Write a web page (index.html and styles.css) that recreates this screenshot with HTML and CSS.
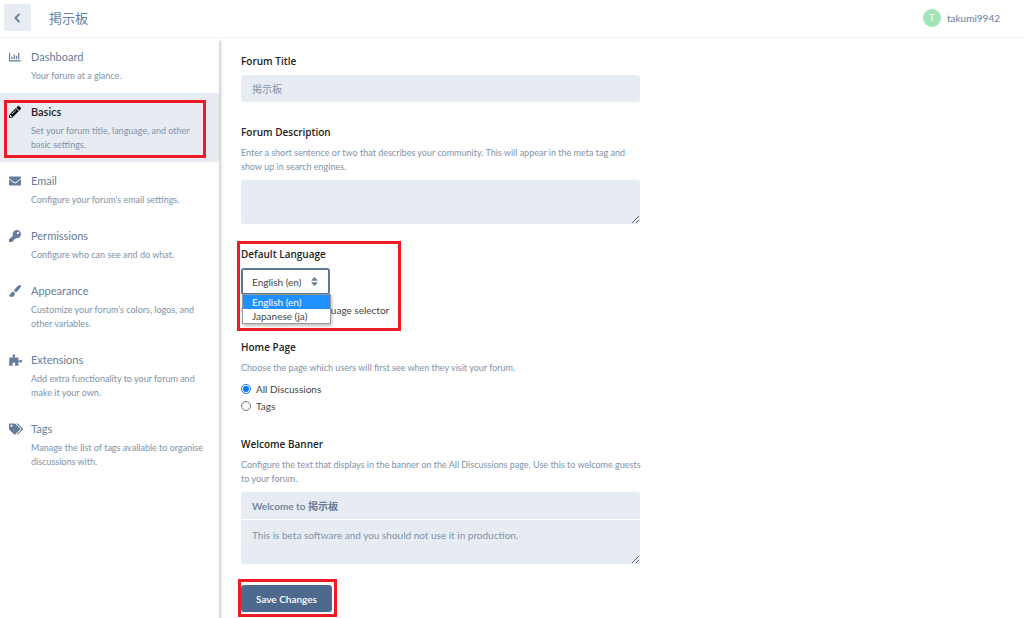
FILE: index.html
```html
<!DOCTYPE html>
<html lang="en">
<head>
  <meta charset="UTF-8" />
  <meta name="viewport" content="width=device-width, initial-scale=1" />
  <title>Basics - 掲示板</title>
  <link rel="stylesheet" href="styles.css">
</head>
<body>
  <header class="header">
    <button type="button" class="back" aria-label="Back">
      <svg viewBox="0 0 320 512"><path d="M34.52 239.03L228.87 44.69c9.37-9.37 24.57-9.37 33.94 0l22.67 22.67c9.36 9.36 9.37 24.52.04 33.9L131.49 256l154.02 154.75c9.34 9.38 9.32 24.54-.04 33.9l-22.67 22.67c-9.37 9.37-24.57 9.37-33.94 0L34.52 272.97c-9.37-9.37-9.37-24.57 0-33.94z"/></svg>
    </button>
    <a class="site-title" href="#">掲示板</a>
    <a class="user" href="#"><span class="avatar">T</span>takumi9942</a>
  </header>

  <div class="page">
    <nav class="sidebar">
      <a class="nav-item" href="#">
        <svg class="icon" viewBox="0 0 512 512"><path d="M24 64a24 24 0 0 1 24 24v304h440a28 28 0 0 1 0 56H24a24 24 0 0 1-24-24V88a24 24 0 0 1 24-24zM100 240h52v112h-52zM196 150h52v202h-52zM292 200h52v152h-52zM388 90h52v262h-52z"/></svg>
        <span class="nav-title">Dashboard</span>
        <span class="nav-text">Your forum at a glance.</span>
      </a>
      <a class="nav-item active marked" href="#">
        <svg class="icon" viewBox="0 0 512 512"><path d="M497.9 142.1l-46.1 46.1c-4.7 4.7-12.3 4.7-17 0l-111-111c-4.7-4.7-4.7-12.3 0-17l46.1-46.1c18.7-18.7 49.1-18.7 67.9 0l60.1 60.1c18.8 18.7 18.8 49.1 0 67.9zM284.2 99.8L21.6 362.4.4 483.9c-2.9 16.4 11.4 30.6 27.8 27.8l121.5-21.3 262.6-262.6c4.7-4.7 4.7-12.3 0-17l-111-111c-4.8-4.7-12.4-4.7-17.1 0zM124.1 339.9c-5.5-5.5-5.5-14.3 0-19.8l154-154c5.5-5.5 14.3-5.5 19.8 0s5.5 14.3 0 19.8l-154 154c-5.5 5.5-14.3 5.5-19.8 0zM88 424h48v36.3l-64.5 11.3-31.1-31.1L51.7 376H88v48z"/></svg>
        <span class="nav-title">Basics</span>
        <span class="nav-text">Set your forum title, language, and other basic settings.</span>
      </a>
      <a class="nav-item" href="#">
        <svg class="icon" viewBox="0 0 512 512"><path d="M502.3 190.8c3.9-3.1 9.7-.2 9.7 4.7V400c0 26.5-21.5 48-48 48H48c-26.5 0-48-21.5-48-48V195.6c0-5 5.7-7.8 9.7-4.7 22.4 17.4 52.1 39.5 154.1 113.6 21.1 15.4 56.7 47.8 92.2 47.6 35.7.3 72-32.8 92.3-47.6 102-74.1 131.6-96.3 154-113.7zM256 320c23.2.4 56.6-29.2 73.4-41.4 132.7-96.3 142.8-104.7 173.4-128.7 5.8-4.5 9.2-11.5 9.2-18.9v-19c0-26.5-21.5-48-48-48H48c-26.5 0-48 21.5-48 48v19c0 7.4 3.4 14.3 9.2 18.9 30.6 23.9 40.7 32.4 173.4 128.7 16.8 12.2 50.2 41.8 73.4 41.4z"/></svg>
        <span class="nav-title">Email</span>
        <span class="nav-text">Configure your forum's email settings.</span>
      </a>
      <a class="nav-item" href="#">
        <svg class="icon" viewBox="0 0 512 512"><path d="M512 176.001C512 273.203 433.202 352 336 352c-11.22 0-22.19-1.062-32.827-3.069l-24.012 27.014A23.999 23.999 0 0 1 261.223 384H224v40c0 13.255-10.745 24-24 24h-40v40c0 13.255-10.745 24-24 24H24c-13.255 0-24-10.745-24-24v-78.059c0-6.365 2.529-12.47 7.029-16.971l161.802-161.802C163.108 213.814 160 195.271 160 176 160 78.798 238.797.001 335.999 0 433.488-.001 512 78.511 512 176.001zM336 128c0 26.51 21.49 48 48 48s48-21.49 48-48-21.49-48-48-48-48 21.49-48 48z"/></svg>
        <span class="nav-title">Permissions</span>
        <span class="nav-text">Configure who can see and do what.</span>
      </a>
      <a class="nav-item" href="#">
        <svg class="icon" viewBox="0 0 512 512"><path d="M448 4c36-16 78 20 58 62-30 62-130 190-188 236-12 10-26 14-40 12-12-34-40-58-76-64 0-16 6-30 18-42C276 146 386 32 448 4zM168 284c48 0 84 34 84 80 0 82-58 144-142 148C44 514 0 466 0 394c30 22 54 24 62-4 16-64 54-106 106-106z"/></svg>
        <span class="nav-title">Appearance</span>
        <span class="nav-text">Customize your forum's colors, logos, and other variables.</span>
      </a>
      <a class="nav-item" href="#">
        <svg class="icon wide" viewBox="0 0 576 512"><path d="M0 150h150c14 0 18-12 8-28-36-54-18-110 38-110s74 56 38 110c-10 16-6 28 8 28h150v120c0 16 14 22 30 10 62-40 134-30 134 30s-72 70-134 30c-16-12-30-6-30 10v150H258c-18 0-20-14-12-30 26-56 6-110-50-110s-76 54-50 110c8 16 6 30-12 30H0z"/></svg>
        <span class="nav-title">Extensions</span>
        <span class="nav-text">Add extra functionality to your forum and make it your own.</span>
      </a>
      <a class="nav-item" href="#">
        <svg class="icon wide" viewBox="0 0 640 512"><path d="M497.941 225.941L286.059 14.059A48 48 0 0 0 252.118 0H48C21.49 0 0 21.49 0 48v204.118a48 48 0 0 0 14.059 33.941l211.882 211.882c18.744 18.745 49.136 18.746 67.882 0l204.118-204.118c18.745-18.745 18.745-49.137 0-67.882zM112 160c-26.51 0-48-21.49-48-48s21.49-48 48-48 48 21.49 48 48-21.49 48-48 48zm513.941 133.823L421.823 497.941c-18.745 18.745-49.137 18.745-67.882 0l-.36-.36L527.64 323.522c16.999-16.999 26.362-39.6 26.362-63.64s-9.362-46.641-26.362-63.64L331.397 0h48.721a48 48 0 0 1 33.941 14.059l211.882 211.882c18.745 18.745 18.745 49.137 0 67.882z"/></svg>
        <span class="nav-title">Tags</span>
        <span class="nav-text">Manage the list of tags available to organise discussions with.</span>
      </a>
    </nav>

    <main class="content">
      <form class="form">
        <div class="group">
          <label class="label" for="forumTitle">Forum Title</label>
          <input class="control" type="text" id="forumTitle" value="掲示板">
        </div>

        <div class="group">
          <label class="label" for="forumDescription">Forum Description</label>
          <p class="help">Enter a short sentence or two that describes your community. This will appear in the meta tag and show up in search engines.</p>
          <textarea class="control" id="forumDescription"></textarea>
        </div>

        <div class="group marked language">
          <label class="label" for="language">Default Language</label>
          <div class="select">
            <select id="language">
              <option selected>English (en)</option>
              <option>Japanese (ja)</option>
            </select>
            <svg class="sort" viewBox="0 0 320 512"><path d="M41 288h238c21.400 0 32.100 25.900 17 41L177 448c-9.400 9.400-24.600 9.400-33.900 0L24 329c-15.100-15.100-4.400-41 17-41zm255-105L177 64c-9.400-9.400-24.600-9.400-33.900 0L24 183c-15.100 15.100-4.400 41 17 41h238c21.400 0 32.100-25.900 17-41z"/></svg>
            <ul class="options" role="listbox" aria-label="Default Language">
              <li class="selected" role="option" aria-selected="true">English (en)</li>
              <li role="option" aria-selected="false">Japanese (ja)</li>
            </ul>
          </div>
          <label class="check switch"><input type="checkbox">Show language selector</label>
        </div>

        <fieldset class="group">
          <legend class="label">Home Page</legend>
          <p class="help">Choose the page which users will first see when they visit your forum.</p>
          <label class="check"><input type="radio" name="home" checked>All Discussions</label>
          <label class="check"><input type="radio" name="home">Tags</label>
        </fieldset>

        <div class="group">
          <label class="label" for="bannerTitle">Welcome Banner</label>
          <p class="help">Configure the text that displays in the banner on the All Discussions page. Use this to welcome guests to your forum.</p>
          <div class="banner">
            <input class="control" type="text" id="bannerTitle" value="Welcome to 掲示板">
            <textarea class="control" aria-label="Welcome Banner text">This is beta software and you should not use it in production.</textarea>
          </div>
        </div>

        <div class="submit marked">
          <button type="submit" class="save">Save Changes</button>
        </div>
      </form>
    </main>
  </div>
</body>
</html>
```
FILE: styles.css
```css
* {
  box-sizing: border-box;
}
body {
  margin: 0;
  display: flex;
  flex-direction: column;
  min-height: 100vh;
  background: #fff;
  color: #444;
  font-family: Lato, "Noto Sans CJK JP", sans-serif;
  font-size: 10px;
  line-height: 14px;
}
a {
  color: inherit;
  text-decoration: none;
}
input, select, textarea, button {
  font: inherit;
}

/* header */
.header {
  display: flex;
  align-items: center;
  padding: 4px 24px 6px 4px;
  border-bottom: 1px solid #f0f1f3;
  color: #667d99;
}
.back {
  display: flex;
  align-items: center;
  justify-content: center;
  width: 27px;
  height: 27px;
  padding: 0;
  border: 0;
  border-radius: 3px;
  background: #e7ecf3;
}
.back svg {
  height: 10px;
  fill: #667d99;
  stroke: #667d99;
  stroke-width: 24px;
}
.site-title {
  margin-left: 18px;
  font-size: 13px;
  color: #5f7fa8;
}
.user {
  display: flex;
  align-items: center;
  gap: 6px;
  margin-left: auto;
}
.avatar {
  width: 18px;
  height: 18px;
  border-radius: 50%;
  background: #a0e5b9;
  color: #fff;
  font-size: 9px;
  line-height: 18px;
  text-align: center;
}

/* sidebar */
.page {
  display: flex;
  flex: 1;
}
.sidebar {
  flex: 0 0 219px;
  box-shadow: 2px 3px 3px rgba(0, 0, 0, 0.2);
  clip-path: inset(0 -6px 0 0);
}
.nav-item {
  position: relative;
  display: grid;
  grid-template-columns: 22px 1fr;
  row-gap: 4px;
  padding: 11px 12px 10px 9px;
  color: #667d99;
}
.nav-item.active {
  background: #e7ecf3;
}
.icon {
  align-self: center;
  width: 12px;
  height: 12px;
  fill: #667d99;
}
.icon.wide {
  width: 14px;
}
.nav-title {
  font-size: 11px;
  line-height: 16px;
}
.nav-text {
  grid-column: 2;
  font-size: 9px;
  color: #8093aa;
}
.active .icon {
  fill: #111;
}
.active .nav-title {
  color: #222;
  font-weight: 600;
}

/* red frames */
.marked {
  position: relative;
}
.marked::after {
  content: "";
  position: absolute;
  inset: -6px;
  border: 3px solid #ed1c24;
  pointer-events: none;
}
.nav-item.marked::after {
  inset: 7px 13px 4px 4px;
}

/* settings form */
.content {
  flex: 1;
  padding: 16px 22px 0;
}
.form {
  max-width: 399px;
}
.group {
  margin: 0 0 23px;
  padding: 0;
  border: 0;
}
.label {
  display: block;
  margin-bottom: 7px;
  padding: 0;
  color: #222;
  font-family: "Open Sans", sans-serif;
  font-weight: 600;
}
.help {
  margin: 0 -4px 6px 0;
  font-size: 9px;
  color: #8093aa;
}
.control {
  display: block;
  width: 100%;
  height: 27px;
  padding: 6px 11px;
  border: 0;
  border-radius: 3px;
  background: #e7ecf3;
  color: #8093aa;
}
textarea.control {
  height: 44px;
  resize: vertical;
}
.banner {
  display: grid;
  gap: 1px;
  margin-bottom: -2px;
}
.banner input {
  border-radius: 3px 3px 0 0;
  color: #667d99;
  font-weight: 600;
}
.banner textarea {
  padding-top: 8px;
  border-radius: 0 0 3px 3px;
}

.language {
  width: fit-content;
}
.language::after {
  inset: -6px -12px -14px -4px;
}
.select {
  position: relative;
  width: 89px;
}
.select select {
  display: block;
  width: 100%;
  height: 27px;
  padding: 0 20px 0 9px;
  border: 2px solid #5f7897;
  border-radius: 3px;
  appearance: none;
  background: #fff;
  color: #444;
}
.sort {
  position: absolute;
  top: 8px;
  right: 12px;
  height: 11px;
  fill: #667d99;
}
.options {
  position: absolute;
  z-index: 1;
  top: 26px;
  left: 1px;
  right: -1px;
  margin: 0;
  padding: 0;
  border: 1px solid #999;
  box-shadow: 1px 2px 3px rgba(0, 0, 0, 0.25);
  background: #fff;
  color: #444;
  list-style: none;
}
.options li {
  padding-left: 9px;
}
.options .selected {
  background: #1e90ff;
  color: #fff;
}

.check {
  display: flex;
  align-items: center;
  gap: 5px;
  line-height: 16px;
}
.check + .check {
  margin-top: 1px;
}
.check input {
  width: 10px;
  height: 10px;
  margin: 0;
}
.switch {
  gap: 9px;
  margin-top: 8px;
  line-height: 14px;
}
.switch input {
  width: 36px;
  height: 14px;
  border-radius: 7px;
  appearance: none;
  background: #d5dce6;
}

.submit {
  width: fit-content;
}
.submit::after {
  inset: -6px -5px -5px -3px;
}
.save {
  display: block;
  height: 27px;
  padding: 0 15px;
  border: 0;
  border-radius: 3px;
  background: #4d698e;
  color: #fff;
  font-weight: 600;
}
```
